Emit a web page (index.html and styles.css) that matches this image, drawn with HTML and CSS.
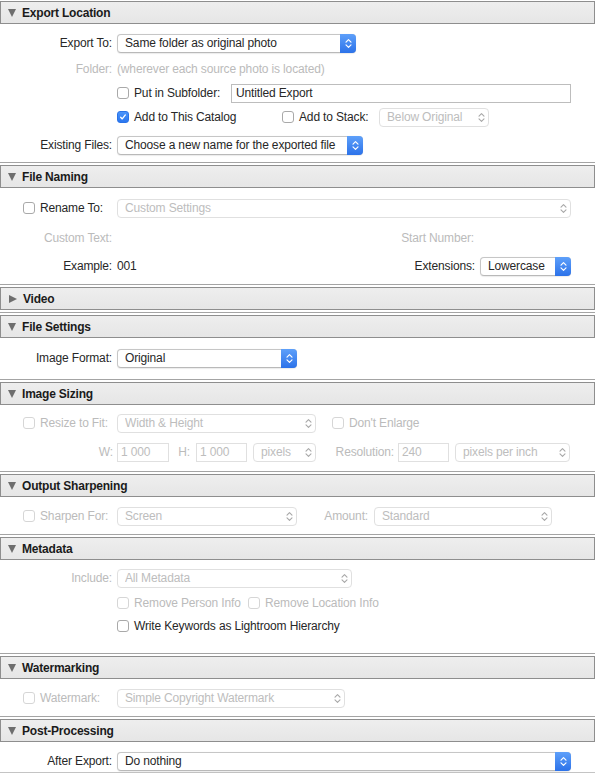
FILE: index.html
```html
<!DOCTYPE html>
<html>
<head>
<meta charset="utf-8">
<link rel="stylesheet" href="styles.css">
</head>
<body>
<div class="panel">

  <section class="sec first">
    <div class="hdr"><span class="tri down"></span><span class="title">Export Location</span></div>
    <div class="body b-export">
      <div class="row">
        <span class="lbl">Export To:</span>
        <div class="pop w-exportto"><span class="val">Same folder as original photo</span><span class="arr"><svg width="7" height="11" viewBox="0 0 7 11"><path d="M1 4.2L3.5 1.7L6 4.2M1 6.8L3.5 9.3L6 6.8" fill="none" stroke="#fff" stroke-width="1.2" stroke-linecap="round" stroke-linejoin="round"/></svg></span></div>
      </div>
      <div class="row mt6">
        <span class="lbl dis">Folder:</span>
        <span class="dis">(wherever each source photo is located)</span>
      </div>
      <div class="row mt4 pr24">
        <span class="lbl"></span>
        <span class="cb"></span><span class="cbt">Put in Subfolder:</span>
        <div class="tf w-sub">Untitled Export</div>
      </div>
      <div class="row mt4">
        <span class="lbl"></span>
        <span class="grp w-g165"><span class="cb on"><svg width="12" height="12" viewBox="0 0 12 12"><path d="M3.2 6.3L5.1 8.3L8.8 3.5" stroke="#fff" stroke-width="1.6" fill="none" stroke-linecap="round" stroke-linejoin="round"/></svg></span><span class="cbt">Add to This Catalog</span></span>
        <span class="grp w-g97"><span class="cb"></span><span class="cbt">Add to Stack:</span></span>
        <div class="pop dis w-below"><span class="val">Below Original</span><span class="arr"><svg width="7" height="11" viewBox="0 0 7 11"><path d="M1 4.2L3.5 1.7L6 4.2M1 6.8L3.5 9.3L6 6.8" fill="none" stroke="#a8a8a8" stroke-width="1.1" stroke-linecap="round" stroke-linejoin="round"/></svg></span></div>
      </div>
      <div class="row mt8">
        <span class="lbl">Existing Files:</span>
        <div class="pop w-existing"><span class="val">Choose a new name for the exported file</span><span class="arr"><svg width="7" height="11" viewBox="0 0 7 11"><path d="M1 4.2L3.5 1.7L6 4.2M1 6.8L3.5 9.3L6 6.8" fill="none" stroke="#fff" stroke-width="1.2" stroke-linecap="round" stroke-linejoin="round"/></svg></span></div>
      </div>
    </div>
  </section>

  <section class="sec">
    <div class="hdr"><span class="tri down"></span><span class="title">File Naming</span></div>
    <div class="body b-naming">
      <div class="row">
        <span class="cbl"><span class="cb"></span><span>Rename To:</span></span>
        <div class="pop dis w-rename"><span class="val">Custom Settings</span><span class="arr"><svg width="7" height="11" viewBox="0 0 7 11"><path d="M1 4.2L3.5 1.7L6 4.2M1 6.8L3.5 9.3L6 6.8" fill="none" stroke="#a8a8a8" stroke-width="1.1" stroke-linecap="round" stroke-linejoin="round"/></svg></span></div>
      </div>
      <div class="row mt10">
        <span class="lbl dis">Custom Text:</span>
        <span class="rlbl w-startnum dis">Start Number:</span>
      </div>
      <div class="row mt8">
        <span class="lbl">Example:</span>
        <span class="w-example">001</span>
        <span class="rlbl w-ext">Extensions:</span>
        <div class="pop w-lower"><span class="val">Lowercase</span><span class="arr"><svg width="7" height="11" viewBox="0 0 7 11"><path d="M1 4.2L3.5 1.7L6 4.2M1 6.8L3.5 9.3L6 6.8" fill="none" stroke="#fff" stroke-width="1.2" stroke-linecap="round" stroke-linejoin="round"/></svg></span></div>
      </div>
    </div>
  </section>

  <section class="sec">
    <div class="hdr"><span class="tri right"></span><span class="title">Video</span></div>
    <div class="body b-video"></div>
  </section>

  <section class="sec">
    <div class="hdr"><span class="tri down"></span><span class="title">File Settings</span></div>
    <div class="body b-filesettings">
      <div class="row">
        <span class="lbl">Image Format:</span>
        <div class="pop w-format"><span class="val">Original</span><span class="arr"><svg width="7" height="11" viewBox="0 0 7 11"><path d="M1 4.2L3.5 1.7L6 4.2M1 6.8L3.5 9.3L6 6.8" fill="none" stroke="#fff" stroke-width="1.2" stroke-linecap="round" stroke-linejoin="round"/></svg></span></div>
      </div>
    </div>
  </section>

  <section class="sec">
    <div class="hdr"><span class="tri down"></span><span class="title">Image Sizing</span></div>
    <div class="body b-sizing">
      <div class="row">
        <span class="cbl dis"><span class="cb dcb"></span><span>Resize to Fit:</span></span>
        <div class="pop dis w-wh"><span class="val">Width &amp; Height</span><span class="arr"><svg width="7" height="11" viewBox="0 0 7 11"><path d="M1 4.2L3.5 1.7L6 4.2M1 6.8L3.5 9.3L6 6.8" fill="none" stroke="#a8a8a8" stroke-width="1.1" stroke-linecap="round" stroke-linejoin="round"/></svg></span></div>
        <span class="grp ml16 dis"><span class="cb dcb"></span><span class="cbt">Don't Enlarge</span></span>
      </div>
      <div class="row mt9">
        <span class="lbl dis pr4">W:</span>
        <div class="tf dis w-w">1 000</div>
        <span class="rlbl dis w-hl">H:</span>
        <div class="tf dis w-h">1 000</div>
        <div class="pop dis w-pixels ml6"><span class="val">pixels</span><span class="arr"><svg width="7" height="11" viewBox="0 0 7 11"><path d="M1 4.2L3.5 1.7L6 4.2M1 6.8L3.5 9.3L6 6.8" fill="none" stroke="#a8a8a8" stroke-width="1.1" stroke-linecap="round" stroke-linejoin="round"/></svg></span></div>
        <span class="rlbl dis w-resl">Resolution:</span>
        <div class="tf dis w-res">240</div>
        <div class="pop dis w-ppi ml6"><span class="val">pixels per inch</span><span class="arr"><svg width="7" height="11" viewBox="0 0 7 11"><path d="M1 4.2L3.5 1.7L6 4.2M1 6.8L3.5 9.3L6 6.8" fill="none" stroke="#a8a8a8" stroke-width="1.1" stroke-linecap="round" stroke-linejoin="round"/></svg></span></div>
      </div>
    </div>
  </section>

  <section class="sec">
    <div class="hdr"><span class="tri down"></span><span class="title">Output Sharpening</span></div>
    <div class="body b-sharp">
      <div class="row">
        <span class="cbl dis"><span class="cb dcb"></span><span>Sharpen For:</span></span>
        <div class="pop dis w-screen"><span class="val">Screen</span><span class="arr"><svg width="7" height="11" viewBox="0 0 7 11"><path d="M1 4.2L3.5 1.7L6 4.2M1 6.8L3.5 9.3L6 6.8" fill="none" stroke="#a8a8a8" stroke-width="1.1" stroke-linecap="round" stroke-linejoin="round"/></svg></span></div>
        <span class="rlbl dis w-amountl">Amount:</span>
        <div class="pop dis w-standard"><span class="val">Standard</span><span class="arr"><svg width="7" height="11" viewBox="0 0 7 11"><path d="M1 4.2L3.5 1.7L6 4.2M1 6.8L3.5 9.3L6 6.8" fill="none" stroke="#a8a8a8" stroke-width="1.1" stroke-linecap="round" stroke-linejoin="round"/></svg></span></div>
      </div>
    </div>
  </section>

  <section class="sec">
    <div class="hdr"><span class="tri down"></span><span class="title">Metadata</span></div>
    <div class="body b-meta">
      <div class="row">
        <span class="lbl dis">Include:</span>
        <div class="pop dis w-allmeta"><span class="val">All Metadata</span><span class="arr"><svg width="7" height="11" viewBox="0 0 7 11"><path d="M1 4.2L3.5 1.7L6 4.2M1 6.8L3.5 9.3L6 6.8" fill="none" stroke="#a8a8a8" stroke-width="1.1" stroke-linecap="round" stroke-linejoin="round"/></svg></span></div>
      </div>
      <div class="row mt5">
        <span class="lbl"></span>
        <span class="grp w-g131 dis"><span class="cb dcb"></span><span class="cbt">Remove Person Info</span></span>
        <span class="grp dis"><span class="cb dcb"></span><span class="cbt">Remove Location Info</span></span>
      </div>
      <div class="row mt3">
        <span class="lbl"></span>
        <span class="cb"></span><span class="cbt">Write Keywords as Lightroom Hierarchy</span>
      </div>
    </div>
  </section>

  <section class="sec">
    <div class="hdr"><span class="tri down"></span><span class="title">Watermarking</span></div>
    <div class="body b-water">
      <div class="row">
        <span class="cbl dis"><span class="cb dcb"></span><span>Watermark:</span></span>
        <div class="pop dis w-wm"><span class="val">Simple Copyright Watermark</span><span class="arr"><svg width="7" height="11" viewBox="0 0 7 11"><path d="M1 4.2L3.5 1.7L6 4.2M1 6.8L3.5 9.3L6 6.8" fill="none" stroke="#a8a8a8" stroke-width="1.1" stroke-linecap="round" stroke-linejoin="round"/></svg></span></div>
      </div>
    </div>
  </section>

  <section class="sec last">
    <div class="hdr"><span class="tri down"></span><span class="title">Post-Processing</span></div>
    <div class="body b-post">
      <div class="row">
        <span class="lbl">After Export:</span>
        <div class="pop w-after"><span class="val">Do nothing</span><span class="arr"><svg width="7" height="11" viewBox="0 0 7 11"><path d="M1 4.2L3.5 1.7L6 4.2M1 6.8L3.5 9.3L6 6.8" fill="none" stroke="#fff" stroke-width="1.2" stroke-linecap="round" stroke-linejoin="round"/></svg></span></div>
      </div>
    </div>
  </section>

</div>
</body>
</html>
```
FILE: styles.css
```css
* { box-sizing: border-box; }
html, body { margin: 0; padding: 0; background: #ffffff; }
body {
  font-family: "Liberation Sans", Arial, sans-serif;
  font-size: 12px;
  color: #272727;
  letter-spacing: -0.15px;
}
.panel { width: 595px; padding-top: 1px; }

.sec { border-top: 1px solid #a4a4a4; padding-top: 2px; }
.sec.first { border-top: 0; padding-top: 0; }
.sec.last { border-bottom: 1px solid #c4c4c4; }

.hdr {
  height: 23px;
  border: 1px solid #8e8e8e;
  background: linear-gradient(#eeeeee, #e6e6e6);
  display: flex;
  align-items: center;
  padding-left: 7px;
}
.tri { width: 0; height: 0; margin-right: 6px; }
.tri.down {
  border-left: 4.5px solid transparent;
  border-right: 4.5px solid transparent;
  border-top: 8px solid #6e6e6e;
}
.tri.right {
  margin-left: 1px;
  margin-right: 6px;
  border-top: 4.5px solid transparent;
  border-bottom: 4.5px solid transparent;
  border-left: 8px solid #6e6e6e;
}
.title { font-weight: bold; color: #1b1b1b; letter-spacing: -0.2px; }

.body { padding-top: 9px; padding-bottom: 8px; }
.b-export { padding-bottom: 7px; }
.b-naming { padding-top: 10px; }
.b-video { padding: 0; height: 2px; }
.b-filesettings { padding-top: 10px; padding-bottom: 11px; }
.b-sizing { padding-top: 8px; padding-bottom: 9px; }
.b-meta { padding-top: 8px; padding-bottom: 17px; }
.b-post { padding-bottom: 1px; }

.row { height: 20px; display: flex; align-items: center; white-space: nowrap; }
.mt3 { margin-top: 3px; }
.mt4 { margin-top: 4px; }
.mt5 { margin-top: 5px; }
.mt6 { margin-top: 6px; }
.mt8 { margin-top: 8px; }
.mt9 { margin-top: 9px; }
.mt10 { margin-top: 10px; }
.ml6 { margin-left: 6px; }
.ml16 { margin-left: 16px; }
.pr24 { padding-right: 24px; }

.lbl { width: 117px; flex: none; text-align: right; padding-right: 5px; }
.lbl.pr4 { padding-right: 4px; }
.cbl { width: 117px; flex: none; display: flex; align-items: center; padding-left: 23px; gap: 5px; }
.rlbl { flex: none; text-align: right; padding-right: 5px; }
.grp { flex: none; display: flex; align-items: center; }

.dis { color: #bbbbbb; }

.cb {
  width: 12px; height: 12px; flex: none;
  border: 1px solid #a9a9a9;
  border-radius: 3px;
  background: #ffffff;
  display: flex; align-items: center; justify-content: center;
}
.cb.dcb { border-color: #d6d6d6; }
.cb.on { border-color: #2a73e8; background: linear-gradient(#4b94fa, #2b77ef); }
.cbt { margin-left: 5px; }

.pop {
  height: 19px; flex: none;
  border: 1px solid #c6c6c6;
  border-bottom-color: #b9b9b9;
  border-radius: 4px;
  background: #ffffff;
  box-shadow: 0 0.5px 1px rgba(0, 0, 0, 0.08);
  display: flex; align-items: center;
  padding-left: 7px;
}
.pop .val { flex: 1; overflow: hidden; }
.pop .arr {
  width: 16px; height: 19px; flex: none;
  margin: -1px -1px -1px 0;
  border-radius: 0 4px 4px 0;
  background: linear-gradient(#5ea0fa, #2c72e9);
  display: flex; align-items: center; justify-content: center;
}
.pop.dis { border-color: #e0e0e0; box-shadow: none; color: #bdbdbd; }
.pop.dis .arr { background: none; }

.tf {
  height: 19px; flex: none;
  border: 1px solid #bdbdbd;
  padding-left: 4px;
  display: flex; align-items: center;
}
.tf.dis { border-color: #e0e0e0; color: #bdbdbd; padding-left: 3px; }

.w-exportto { width: 239px; }
.w-sub { width: 340px; margin-left: auto; }
.w-g165 { width: 165px; }
.w-g97 { width: 97px; }
.w-g131 { width: 131px; }
.w-below { width: 110px; }
.w-existing { width: 246px; }
.w-rename { width: 454px; }
.w-startnum { width: 362px; }
.w-example { width: 1px; }
.w-ext { width: 362px; }
.w-lower { width: 91px; }
.w-format { width: 180px; }
.w-wh { width: 199px; }
.w-w { width: 52px; }
.w-hl { width: 27px; padding-right: 6px; }
.w-h { width: 51px; }
.w-pixels { width: 63px; }
.w-resl { width: 82px; padding-right: 4px; }
.w-res { width: 51px; }
.w-ppi { width: 115px; }
.w-screen { width: 180px; }
.w-amountl { width: 77px; padding-right: 6px; }
.w-standard { width: 178px; }
.w-allmeta { width: 235px; }
.w-wm { width: 228px; }
.w-after { width: 454px; }
```
